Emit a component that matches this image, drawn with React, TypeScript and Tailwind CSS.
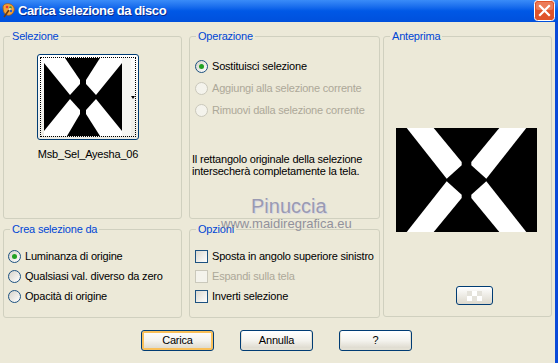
import React from 'react';

const ui = "font-['Liberation_Sans',Arial,sans-serif] text-[11px] leading-[13px] tracking-[-0.2px] whitespace-nowrap";

function Radio({ checked, disabled }: { checked?: boolean; disabled?: boolean }) {
  return (
    <span
      className={`flex items-center justify-center w-[13px] h-[13px] rounded-full border shrink-0 ${
        disabled ? 'border-[#cac8bb] bg-[#f4f3ec]' : 'border-[#1c5180] bg-gradient-to-br from-[#d6d3c9] to-white'
      }`}
    >
      {checked && <span className="w-[5px] h-[5px] rounded-full bg-[#21a121]" />}
    </span>
  );
}

function Check({ disabled }: { disabled?: boolean }) {
  return (
    <span
      className={`w-[13px] h-[13px] border shrink-0 ${
        disabled ? 'border-[#cac8bb] bg-[#f4f3ec]' : 'border-[#1c5180] bg-gradient-to-br from-[#dcd9cf] to-white'
      }`}
    />
  );
}

function Group({ title, className, children }: { title: string; className: string; children?: React.ReactNode }) {
  return (
    <fieldset className={`border border-[#d0d0bf] rounded-[3px] ${className}`}>
      <legend className="ml-[6px] px-[2px] text-[#0046d5]">{title}</legend>
      {children}
    </fieldset>
  );
}

function XpButton({ label, focused }: { label: string; focused?: boolean }) {
  return (
    <div
      className={`w-[73px] h-[21px] rounded-[3px] border border-[#003c74] bg-gradient-to-b from-white via-[#f4f3ee] to-[#d9d5c8] flex items-center justify-center text-black ${
        focused ? 'shadow-[inset_0_0_0_2px_#f9c05a]' : 'shadow-[inset_0_-1px_0_1px_#e3e0d4]'
      }`}
    >
      {label}
    </div>
  );
}

function PreviewX() {
  return (
    <svg width="141" height="104" viewBox="0 0 141 104" className="block">
      <rect width="141" height="104" fill="#000" />
      <g fill="#fff">
        <polygon points="10.7,0 37.7,0 65.7,34 65.7,37.3 50.7,50.7" />
        <polygon points="130.3,0 103.3,0 75.3,34 75.3,37.3 90.3,50.7" />
        <polygon points="10.7,104 37.7,104 65.7,70 65.7,66.7 50.7,53.3" />
        <polygon points="130.3,104 103.3,104 75.3,70 75.3,66.7 90.3,53.3" />
      </g>
    </svg>
  );
}

function ThumbX() {
  return (
    <svg width="78" height="78" viewBox="0 0 78 78" className="block shrink-0">
      <rect width="78" height="78" fill="#000" />
      <g fill="#fff">
        <polygon points="0,0 21,0 36,22 36,26 26,37 0,5" />
        <polygon points="78,0 56,0 42,22 42,26 52,37 78,5" />
        <polygon points="0,78 23,78 36,56 36,52 26,41 0,73" />
        <polygon points="78,78 56,78 42,56 42,52 52,41 78,73" />
      </g>
    </svg>
  );
}

function TitleIcon() {
  return (
    <svg width="15" height="16" viewBox="0 0 15 16">
      <path d="M2 5 C2 2 6 1 9 2 C12 3 14 6 13 9 C12 12 9 14 6 13 C3 12 2 9 2 5 Z" fill="#f2a33a" stroke="#a55a12" strokeWidth="0.8" />
      <circle cx="6" cy="5" r="1.3" fill="#e33" />
      <circle cx="9.5" cy="5.5" r="1.2" fill="#2a9d3a" />
      <circle cx="10" cy="9" r="1.2" fill="#2d5fd0" />
      <path d="M3 15 L8 8" stroke="#6b3b12" strokeWidth="1.6" />
      <path d="M8 8 L9.5 6.3" stroke="#ddd" strokeWidth="1.6" />
    </svg>
  );
}

function CloseIcon() {
  return (
    <svg width="21" height="21" viewBox="0 0 21 21" className="block shrink-0">
      <rect x="0.5" y="0.5" width="20" height="20" rx="3" fill="#e0532a" stroke="#ffffff" />
      <rect x="2" y="2" width="17" height="8" rx="2" fill="#ec7b58" />
      <path d="M6 6 L15 15 M15 6 L6 15" stroke="#ffffff" strokeWidth="2.2" strokeLinecap="square" />
    </svg>
  );
}

export default function App() {
  return (
    <div className={`w-[558px] h-[363px] overflow-hidden bg-[#ece9d8] ${ui}`}>
      {/* title bar */}
      <div className="h-[22px] flex items-start bg-gradient-to-b from-[#3a8cf8] via-[#0058e6] to-[#0050dc]">
        <div className="pl-[1px] pt-[2px]">
          <TitleIcon />
        </div>
        <span className="ml-[2px] mt-[3px] text-white font-bold text-[13px] leading-[15px] tracking-[-0.4px] [text-shadow:1px_1px_0_#0a2a8a]">
          Carica selezione da disco
        </span>
        <div className="ml-auto mr-[3px] shrink-0">
          <CloseIcon />
        </div>
      </div>

      {/* body */}
      <div className="relative h-[341px] border-r-[3px] border-[#0a4ad8] pl-[3px] pt-[8px]">
        <div className="flex">
          <div className="flex flex-col gap-[4px] w-[179px]">
            <Group title="Selezione" className="h-[189px]">
              <div className="ml-[33px] mt-[11px] w-[102px] h-[86px] rounded-[3px] border border-[#003c74] bg-gradient-to-b from-white to-[#ecebe4] p-[2px]">
                <div className="w-full h-full border border-dotted border-black flex">
                  <div className="ml-[3px] flex">
                    <ThumbX />
                    <div className="w-[9px] h-[78px] bg-[#f6f6f2]" />
                  </div>
                  <div className="flex-1 flex items-center">
                    <span className="w-0 h-0 border-l-[2px] border-r-[2px] border-t-[3px] border-l-transparent border-r-transparent border-t-black" />
                  </div>
                </div>
              </div>
              <div className="ml-[33px] w-[102px] mt-[8px] text-center text-black">Msb_Sel_Ayesha_06</div>
            </Group>
            <Group title="Crea selezione da" className="h-[95px]">
              <div className="mt-[10px] pl-[4px] flex flex-col">
                <div className="h-[20px] flex items-center gap-[4px]">
                  <Radio checked />
                  <span>Luminanza di origine</span>
                </div>
                <div className="h-[20px] flex items-center gap-[4px]">
                  <Radio />
                  <span>Qualsiasi val. diverso da zero</span>
                </div>
                <div className="h-[20px] flex items-center gap-[4px]">
                  <Radio />
                  <span>Opacità di origine</span>
                </div>
              </div>
            </Group>
          </div>

          <div className="flex flex-col gap-[4px] w-[191px] ml-[7px]">
            <Group title="Operazione" className="h-[189px]">
              <div className="mt-[12px] pl-[5px] flex flex-col">
                <div className="h-[22px] flex items-center gap-[4px]">
                  <Radio checked />
                  <span>Sostituisci selezione</span>
                </div>
                <div className="h-[22px] flex items-center gap-[4px] text-[#aca899]">
                  <Radio disabled />
                  <span>Aggiungi alla selezione corrente</span>
                </div>
                <div className="h-[22px] flex items-center gap-[4px] text-[#aca899]">
                  <Radio disabled />
                  <span>Rimuovi dalla selezione corrente</span>
                </div>
              </div>
              <p className="mt-[32px] pl-[2px] leading-[12px]">
                Il rettangolo originale della selezione
                <br />
                intersecherà completamente la tela.
              </p>
            </Group>
            <Group title="Opzioni" className="h-[95px]">
              <div className="mt-[10px] pl-[5px] flex flex-col">
                <div className="h-[20px] flex items-center gap-[4px]">
                  <Check />
                  <span>Sposta in angolo superiore sinistro</span>
                </div>
                <div className="h-[20px] flex items-center gap-[4px] text-[#aca899]">
                  <Check disabled />
                  <span>Espandi sulla tela</span>
                </div>
                <div className="h-[20px] flex items-center gap-[4px]">
                  <Check />
                  <span>Inverti selezione</span>
                </div>
              </div>
            </Group>
          </div>

          <Group title="Anteprima" className="w-[169px] h-[287px] ml-[3px]">
            <div className="ml-[12px] mt-[85px]">
              <PreviewX />
            </div>
            <div className="ml-[72px] mt-[54px] w-[37px] h-[19px] rounded-[3px] border border-[#003c74] bg-gradient-to-b from-white to-[#dcd8cc] flex items-center justify-center">
              <div className="grid grid-cols-3 w-[15px] h-[10px]">
                <span className="bg-[#e4e2da]" />
                <span className="bg-white" />
                <span className="bg-[#e4e2da]" />
                <span className="bg-white" />
                <span className="bg-[#e4e2da]" />
                <span className="bg-white" />
              </div>
            </div>
          </Group>
        </div>

        <div className="flex gap-[26px] pl-[138px] mt-[12px]">
          <XpButton label="Carica" focused />
          <XpButton label="Annulla" />
          <XpButton label="?" />
        </div>

        {/* watermark */}
        <span className="absolute left-[251px] top-[174px] text-[20px] leading-none tracking-[0px] text-[#9a9ab2] [text-shadow:1px_1px_0_#d8d8e4]">
          Pinuccia
        </span>
        <span className="absolute left-[221px] top-[195px] text-[13px] leading-none tracking-[0px] text-[#7c7c8e] opacity-80">
          www.maidiregrafica.eu
        </span>
      </div>
    </div>
  );
}
